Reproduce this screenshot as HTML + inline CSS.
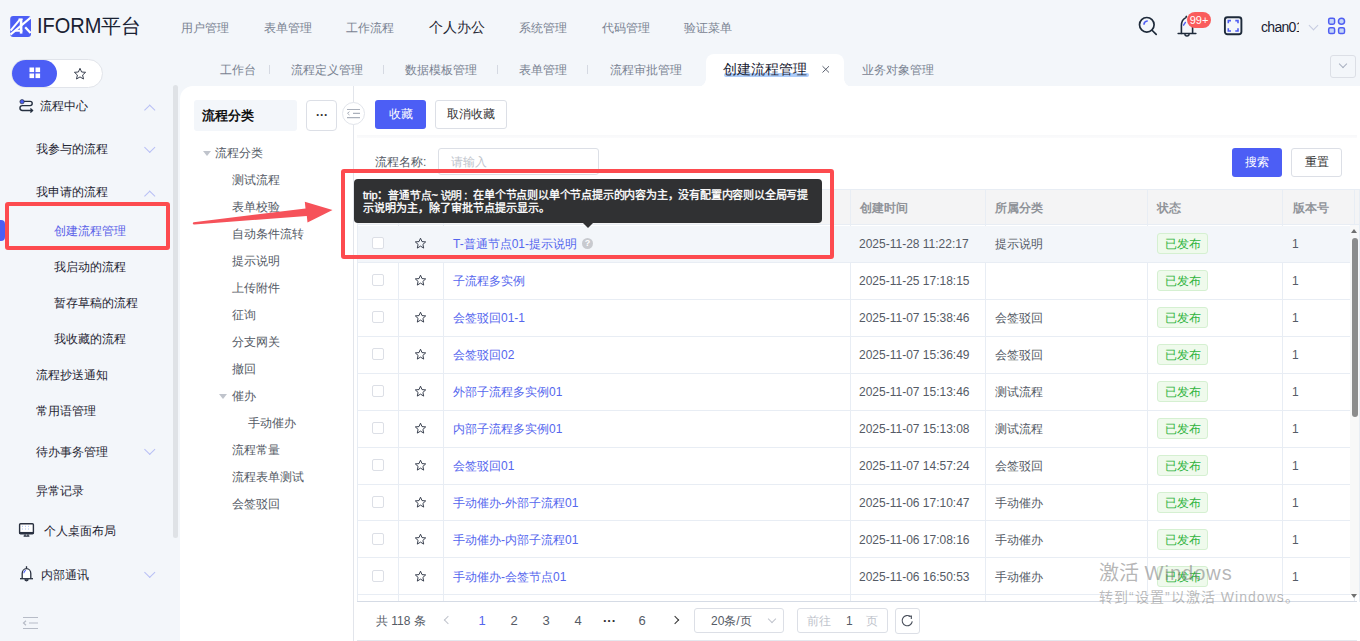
<!DOCTYPE html>
<html><head><meta charset="utf-8">
<style>
*{margin:0;padding:0;box-sizing:border-box;}
html,body{width:1360px;height:641px;overflow:hidden;background:#f3f6fa;font-family:"Liberation Sans",sans-serif;font-size:12px;color:#1f2533;}
.a{position:absolute;white-space:nowrap;}
.t12{font-size:12px;line-height:16px;height:16px;}
/* header */
.nav{color:#7a8392;font-size:12px;line-height:16px;top:20px;}
.tab{color:#7a8392;font-size:12px;line-height:16px;top:62px;}
.sep{position:absolute;top:65px;width:1px;height:9px;background:#d5d9e2;}
.side{font-size:12px;line-height:16px;color:#1f2533;}
.chev{position:absolute;width:7.5px;height:7.5px;border-left:1px solid #b8bff5;border-top:1px solid #b8bff5;}
.tree{font-size:12px;line-height:16px;color:#555b66;}
.row{position:absolute;left:357px;width:993px;height:37px;border-bottom:1px solid #e8edf4;}
.cell{position:absolute;top:0;height:37px;line-height:37px;font-size:12px;color:#555b66;white-space:nowrap;}
.link{color:#5566ee;}
.cb{position:absolute;left:15px;top:12px;width:12px;height:12px;border:1px solid #dcdfe6;border-radius:2px;background:#fff;}
.tag{position:absolute;top:8px;height:21px;line-height:19px;padding:0 6px;border:1px solid #d3f0cf;background:#effaec;color:#3bb44a;border-radius:3px;font-size:12px;}
.vl{position:absolute;top:0;width:1px;height:37px;background:#e8edf4;}
</style></head><body>

<!-- ===== HEADER ===== -->
<svg class="a" style="left:10px;top:16px" width="21" height="21" viewBox="0 0 21 21">
  <rect x="0.2" y="0" width="20.8" height="21" rx="3" fill="#4c5ef5"/>
  <path d="M0.4 18.6 L21 1.4" stroke="#fff" stroke-width="2.1"/>
  <path d="M0.6 14.6 L9.8 3.6" stroke="#fff" stroke-width="2"/>
  <path d="M8.6 3.2 H12.6" stroke="#fff" stroke-width="1.6"/>
  <path d="M11.1 3 V17.6" stroke="#fff" stroke-width="2.6"/>
  <path d="M5.2 14.8 H12.4" stroke="#fff" stroke-width="1.9"/>
  <path d="M15.2 11.3 L20.6 17" stroke="#fff" stroke-width="2.2"/>
</svg>
<div class="a" style="left:37px;top:13px;font-size:20px;line-height:26px;color:#1a2233;"><span style="display:inline-block;transform:scaleY(1.09);transform-origin:50% 19.5px;">IFORM</span>平台</div>

<div class="a nav" style="left:181px">用户管理</div>
<div class="a nav" style="left:264px">表单管理</div>
<div class="a nav" style="left:346px">工作流程</div>
<div class="a nav" style="left:429px;color:#1f2533;font-size:14px;top:19px">个人办公</div>
<div class="a nav" style="left:519px">系统管理</div>
<div class="a nav" style="left:602px">代码管理</div>
<div class="a nav" style="left:684px">验证菜单</div>

<!-- search -->
<svg class="a" style="left:1136px;top:14px" width="24" height="24" viewBox="0 0 24 24">
  <circle cx="10.8" cy="10.8" r="7.3" stroke="#1e2a3a" stroke-width="1.7" fill="none"/>
  <path d="M16.3 16.5 L20.2 20.4" stroke="#1e2a3a" stroke-width="1.7" stroke-linecap="round"/>
  <path d="M8 10.2 A3.6 3.6 0 0 1 11.2 7" stroke="#4f5ef2" stroke-width="1.6" fill="none" stroke-linecap="round"/>
</svg>
<!-- bell -->
<svg class="a" style="left:1176px;top:14px" width="22" height="24" viewBox="0 0 22 24">
  <path d="M2.1 19.4 H19.9" stroke="#1e2a3a" stroke-width="1.5" stroke-linecap="round"/>
  <path d="M5.4 19.4 V11.5 Q5.4 5.8 9.8 3.6 L10.4 2.4" stroke="#1e2a3a" stroke-width="1.6" fill="none" stroke-linecap="round"/>
  <path d="M16.6 19.4 V10 Q16.6 5.8 12.5 3.6" stroke="#1e2a3a" stroke-width="1.6" fill="none"/>
  <path d="M8.9 20 A2.1 2 0 0 0 13.1 20" stroke="#1e2a3a" stroke-width="1.4" fill="none"/>
  <path d="M7.6 11.2 L9.4 8.4" stroke="#4f5ef2" stroke-width="1.4" fill="none" stroke-linecap="round"/>
</svg>
<div class="a" style="left:1187px;top:12px;width:24px;height:16px;border-radius:8px;background:#fa5c5c;color:#fff;font-size:11px;line-height:16px;text-align:center;">99+</div>
<!-- fullscreen -->
<svg class="a" style="left:1223px;top:15px" width="20" height="21" viewBox="0 0 20 21">
  <rect x="1.9" y="2.2" width="16.5" height="17" rx="2.5" stroke="#1e2a3a" stroke-width="1.9" fill="none"/>
  <path d="M5.3 8.3 V5.6 H8 M12.3 5.6 H15 V8.3 M15 13.3 V16 H12.3 M8 16 H5.3 V13.3" stroke="#4f5ef2" stroke-width="1.6" fill="none"/>
</svg>
<div class="a" style="left:1261px;top:18px;width:38px;overflow:hidden;font-size:14px;line-height:18px;letter-spacing:-0.7px;color:#1a2233;">chan01</div>
<div class="a" style="left:1310px;top:22px;width:7px;height:7px;border-right:1px solid #c5cbe0;border-bottom:1px solid #c5cbe0;transform:rotate(45deg);"></div>
<svg class="a" style="left:1327px;top:17px" width="19" height="19" viewBox="0 0 19 19">
  <rect x="1.7" y="1.2" width="5.9" height="6" rx="1.6" fill="#c5d6f8" stroke="#4f5ef2" stroke-width="1.5"/>
  <circle cx="14.5" cy="4.2" r="3.05" fill="#c5d6f8" stroke="#4f5ef2" stroke-width="1.5"/>
  <rect x="1.7" y="10.7" width="5.9" height="5.9" rx="1.6" fill="#c5d6f8" stroke="#4f5ef2" stroke-width="1.5"/>
  <rect x="11.6" y="10.7" width="5.9" height="5.9" rx="1.6" fill="#c5d6f8" stroke="#4f5ef2" stroke-width="1.5"/>
</svg>

<!-- ===== SIDEBAR ===== -->
<div class="a" style="left:11px;top:59px;width:92px;height:29px;border-radius:15px;background:#fff;border:1px solid #e1e4ea;"></div>
<div class="a" style="left:12px;top:60px;width:45px;height:27px;border-radius:14px;background:#4c5ef5;"></div>
<svg class="a" style="left:29px;top:67px" width="12" height="12" viewBox="0 0 12 12"><rect x="0.5" y="0.5" width="4.6" height="4.6" fill="#fff"/><rect x="6.5" y="0.5" width="4.6" height="4.6" fill="#fff"/><rect x="0.5" y="6.5" width="4.6" height="4.6" fill="#fff"/><rect x="6.5" y="6.5" width="4.6" height="4.6" fill="#fff"/></svg>
<svg class="a" style="left:72.5px;top:66.5px" width="14" height="14" viewBox="0 0 14 14"><path d="M7 1.3 L8.6 5 L12.6 5.3 L9.6 8 L10.5 12 L7 9.9 L3.5 12 L4.4 8 L1.4 5.3 L5.4 5 Z" fill="none" stroke="#3a4150" stroke-width="1"/></svg>

<!-- scrollbar -->
<div class="a" style="left:173px;top:85px;width:5px;height:453px;border-radius:3px;background:#dfe2e6;"></div>

<!-- flow center -->
<svg class="a" style="left:14px;top:94px" width="26" height="24" viewBox="0 0 26 24">
  <path d="M8 7.4 H16.1 A2.1 2.1 0 0 1 16.1 11.6 H8.4 A2.45 2.45 0 0 0 8.4 16.5 H18.4" stroke="#253040" stroke-width="1.4" fill="none"/>
  <path d="M16.4 14.5 L18.5 16.5 L16.4 18.5" stroke="#253040" stroke-width="1.4" fill="none"/>
  <circle cx="8.05" cy="7.7" r="2.15" fill="#4c5ef5" stroke="#253040" stroke-width="0.7"/>
</svg>
<div class="a side" style="left:40px;top:98px">流程中心</div>
<div class="chev" style="left:145.5px;top:106px;transform:rotate(45deg)"></div>
<div class="a side" style="left:36px;top:141px">我参与的流程</div>
<div class="chev" style="left:146px;top:144px;transform:rotate(225deg)"></div>
<div class="a side" style="left:36px;top:184px">我申请的流程</div>
<div class="chev" style="left:145.5px;top:192px;transform:rotate(45deg)"></div>
<div class="a" style="left:0;top:220px;width:5px;height:21px;border-radius:0 4px 4px 0;background:#4c5ef5;"></div>
<div class="a side" style="left:54px;top:223px;color:#5b62e8">创建流程管理</div>
<div class="a side" style="left:54px;top:259px">我启动的流程</div>
<div class="a side" style="left:54px;top:295px">暂存草稿的流程</div>
<div class="a side" style="left:54px;top:331px">我收藏的流程</div>
<div class="a side" style="left:36px;top:367px">流程抄送通知</div>
<div class="a side" style="left:36px;top:403px">常用语管理</div>
<div class="a side" style="left:36px;top:444px">待办事务管理</div>
<div class="chev" style="left:146px;top:446px;transform:rotate(225deg)"></div>
<div class="a side" style="left:36px;top:483px">异常记录</div>
<svg class="a" style="left:18px;top:522px" width="17" height="16" viewBox="0 0 17 16">
  <rect x="1.6" y="1.8" width="13.8" height="10" rx="1" stroke="#2a3140" stroke-width="1.4" fill="#fff"/>
  <path d="M1.2 10.9 H15.8" stroke="#2a3140" stroke-width="1.9"/>
  <path d="M4 4.3 H13 M4 7 H13" stroke="#a9c4f5" stroke-width="1" stroke-dasharray="1 2"/>
  <path d="M5.6 14.2 H11.4 M7.2 12.4 L6.8 14.2 M9.8 12.4 L10.2 14.2" stroke="#2a3140" stroke-width="1.3"/>
</svg>
<div class="a side" style="left:44px;top:523px">个人桌面布局</div>
<svg class="a" style="left:18px;top:564px" width="17" height="18" viewBox="0 0 17 18">
  <path d="M4.2 14.6 V9.6 A4.3 5 0 0 1 12.8 9.6 V14.6" stroke="#2a3140" stroke-width="1.3" fill="#fff"/>
  <path d="M2 14.7 H15" stroke="#2a3140" stroke-width="1.3"/>
  <path d="M8.5 2.2 V4.4" stroke="#2a3140" stroke-width="1.3"/>
  <path d="M6.9 15.3 A1.6 1.5 0 0 0 10.1 15.3" stroke="#2a3140" stroke-width="1.3" fill="#2a3140"/>
  <path d="M5.8 9.2 A3 3.6 0 0 1 7.8 6.3" stroke="#4f5ef2" stroke-width="1.1" fill="none"/>
</svg>
<div class="a side" style="left:41px;top:567px">内部通讯</div>
<div class="chev" style="left:146px;top:569px;transform:rotate(225deg)"></div>
<svg class="a" style="left:22px;top:616px" width="17" height="14" viewBox="0 0 17 14">
  <path d="M1 1.5 H16 M7 7 H16 M1 12.5 H16" stroke="#b7bcc7" stroke-width="1.2"/>
  <path d="M4 4.8 L1.5 7 L4 9.2" stroke="#b7bcc7" stroke-width="1.2" fill="none"/>
</svg>

<!-- ===== TABS ===== -->
<div class="a tab" style="left:220px">工作台</div>
<div class="sep" style="left:269px"></div>
<div class="a tab" style="left:291px">流程定义管理</div>
<div class="sep" style="left:383px"></div>
<div class="a tab" style="left:405px">数据模板管理</div>
<div class="sep" style="left:497px"></div>
<div class="a tab" style="left:519px">表单管理</div>
<div class="sep" style="left:587px"></div>
<div class="a tab" style="left:610px">流程审批管理</div>
<!-- active tab -->
<div class="a" style="left:706px;top:54px;width:138px;height:33px;background:#fff;border-radius:8px 8px 0 0;"></div>
<div class="a" style="left:698px;top:79px;width:8px;height:8px;background:radial-gradient(circle at 0 0, #f3f6fa 7.5px, #fff 8px);"></div>
<div class="a" style="left:844px;top:79px;width:8px;height:8px;background:radial-gradient(circle at 100% 0, #f3f6fa 7.5px, #fff 8px);"></div>
<div class="a" style="left:724px;top:73px;width:85px;height:4px;border-radius:2px;background:#aecdf8;"></div>
<div class="a tab" style="left:723px;top:60px;color:#1a2233;font-size:14px;line-height:18px;">创建流程管理</div>
<svg class="a" style="left:821px;top:65px" width="9" height="9" viewBox="0 0 9 9"><path d="M1.5 1.2 L8 7.5 M8 1.2 L1.5 7.5" stroke="#4a5060" stroke-width="0.9"/></svg>
<div class="a tab" style="left:862px">业务对象管理</div>
<div class="a" style="left:1330px;top:55px;width:26px;height:23px;border:1px solid #dcdfe6;border-radius:3px;"></div>
<div class="a" style="left:1340px;top:61px;width:6px;height:6px;border-right:1px solid #a9b0c0;border-bottom:1px solid #a9b0c0;transform:rotate(45deg);"></div>

<!-- ===== MAIN PANEL ===== -->
<div class="a" style="left:180px;top:86px;width:1200px;height:600px;background:#fff;border-radius:13px 0 0 0;"></div>
<!-- tree panel -->
<div class="a" style="left:194px;top:100px;width:103px;height:31px;background:#f3f6fa;border-radius:3px;"></div>
<div class="a" style="left:202px;top:108px;font-size:13px;line-height:16px;font-weight:bold;color:#111;">流程分类</div>
<div class="a" style="left:306px;top:100px;width:31px;height:31px;border:1px solid #dcdfe6;border-radius:4px;"></div>
<div class="a" style="left:316px;top:109px;font-size:12px;line-height:12px;letter-spacing:0px;color:#333;font-weight:bold;">···</div>
<div class="a" style="left:353px;top:86px;width:1px;height:555px;background:#e2e5eb;"></div>
<div class="a" style="left:342px;top:102px;width:23px;height:23px;border:1px solid #e2e5eb;border-radius:50%;background:#fff;"></div>
<svg class="a" style="left:346px;top:108px" width="15" height="11" viewBox="0 0 15 11">
  <path d="M1 1.5 H14 M7 5.3 H14 M1 9.7 H14" stroke="#aab0bb" stroke-width="1.2"/>
  <path d="M3.5 3.6 L1.5 5.3 L3.5 7" stroke="#aab0bb" stroke-width="1" fill="none"/>
</svg>

<!-- tree -->
<div class="a tree" style="left:215px;top:145px">流程分类</div>
<div class="a tree" style="left:232px;top:172px">测试流程</div>
<div class="a tree" style="left:232px;top:199px">表单校验</div>
<div class="a tree" style="left:232px;top:226px">自动条件流转</div>
<div class="a tree" style="left:232px;top:253px">提示说明</div>
<div class="a tree" style="left:232px;top:280px">上传附件</div>
<div class="a tree" style="left:232px;top:307px">征询</div>
<div class="a tree" style="left:232px;top:334px">分支网关</div>
<div class="a tree" style="left:232px;top:361px">撤回</div>
<div class="a tree" style="left:232px;top:388px">催办</div>
<div class="a tree" style="left:248px;top:415px">手动催办</div>
<div class="a tree" style="left:232px;top:442px">流程常量</div>
<div class="a tree" style="left:232px;top:469px">流程表单测试</div>
<div class="a tree" style="left:232px;top:496px">会签驳回</div>
<div class="a" style="left:203px;top:151px;width:0;height:0;border-left:4px solid transparent;border-right:4px solid transparent;border-top:5px solid #c0c4cc;"></div>
<div class="a" style="left:219px;top:394px;width:0;height:0;border-left:4px solid transparent;border-right:4px solid transparent;border-top:5px solid #c0c4cc;"></div>


<!-- ===== TABLE PANEL ===== -->
<div class="a" style="left:375px;top:100px;width:51px;height:29px;background:#4c5ef5;border-radius:3px;color:#fff;font-size:12px;line-height:29px;text-align:center;">收藏</div>
<div class="a" style="left:435px;top:100px;width:72px;height:29px;border:1px solid #dcdfe6;border-radius:3px;color:#333;font-size:12px;line-height:27px;text-align:center;">取消收藏</div>
<div class="a" style="left:357px;top:135px;width:1000px;height:3px;background:linear-gradient(#f7f8fa,#fbfbfc);"></div>
<div class="a" style="left:375px;top:154px;font-size:12px;line-height:16px;color:#555b66;">流程名称:</div>
<div class="a" style="left:438px;top:148px;width:161px;height:27px;border:1px solid #dcdfe6;border-radius:3px;"></div>
<div class="a" style="left:451px;top:154px;font-size:12px;line-height:16px;color:#c0c4cc;">请输入</div>
<div class="a" style="left:1232px;top:148px;width:50px;height:29px;background:#4c5ef5;border-radius:3px;color:#fff;font-size:12px;line-height:29px;text-align:center;">搜索</div>
<div class="a" style="left:1291px;top:148px;width:51px;height:29px;border:1px solid #dcdfe6;border-radius:3px;color:#333;font-size:12px;line-height:27px;text-align:center;">重置</div>

<!-- table header -->
<div class="a" style="left:357px;top:189px;width:1002px;height:36px;background:#f4f4f5;border-top:1px solid #e8edf4;border-bottom:1px solid #e8edf4;"></div>
<div class="a" style="left:357px;top:189px;width:1px;height:413px;background:#e8edf4;"></div>
<div class="a" style="left:398px;top:189px;width:1px;height:413px;background:#e8edf4;"></div>
<div class="a" style="left:443px;top:189px;width:1px;height:413px;background:#e8edf4;"></div>
<div class="a" style="left:850px;top:189px;width:1px;height:413px;background:#e8edf4;"></div>
<div class="a" style="left:985px;top:189px;width:1px;height:413px;background:#e8edf4;"></div>
<div class="a" style="left:1147px;top:189px;width:1px;height:413px;background:#e8edf4;"></div>
<div class="a" style="left:1282px;top:189px;width:1px;height:413px;background:#e8edf4;"></div>
<div class="a" style="left:1354px;top:189px;width:1px;height:413px;background:#e8edf4;"></div>
<div class="a" style="left:860px;top:200px;font-size:12px;line-height:16px;font-weight:bold;color:#909399;">创建时间</div>
<div class="a" style="left:995px;top:200px;font-size:12px;line-height:16px;font-weight:bold;color:#909399;">所属分类</div>
<div class="a" style="left:1157px;top:200px;font-size:12px;line-height:16px;font-weight:bold;color:#909399;">状态</div>
<div class="a" style="left:1293px;top:200px;font-size:12px;line-height:16px;font-weight:bold;color:#909399;">版本号</div>
<div class="a" style="left:358px;top:226px;width:992px;height:36px;background:#f3f6fa;"></div>
<div class="a" style="left:358px;top:262px;width:992px;height:1px;background:#e8edf4;"></div>
<div class="a" style="left:372px;top:237px;width:12px;height:12px;border:1px solid #dcdfe6;border-radius:2px;background:#fff;"></div>
<svg class="a" style="left:414px;top:237px" width="13" height="13" viewBox="0 0 13 13"><path d="M6.5 1.2 L8 4.6 L11.7 4.9 L8.9 7.4 L9.7 11.1 L6.5 9.1 L3.3 11.1 L4.1 7.4 L1.3 4.9 L5 4.6 Z" fill="none" stroke="#3a4150" stroke-width="1"/></svg>
<div class="a" style="left:453px;top:236px;font-size:12px;line-height:16px;color:#5566ee;">T-普通节点01-提示说明</div>
<div class="a" style="left:859px;top:236px;font-size:12px;line-height:16px;color:#555b66;">2025-11-28 11:22:17</div>
<div class="a" style="left:995px;top:236px;font-size:12px;line-height:16px;color:#555b66;">提示说明</div>
<div class="a" style="left:1157px;top:233px;width:51px;height:21px;border:1px solid #d5f0d1;background:#effaec;border-radius:3px;color:#30b43e;font-size:12px;line-height:20px;text-align:center;">已发布</div>
<div class="a" style="left:1292px;top:236px;font-size:12px;line-height:16px;color:#555b66;">1</div>
<div class="a" style="left:358px;top:299px;width:992px;height:1px;background:#e8edf4;"></div>
<div class="a" style="left:372px;top:274px;width:12px;height:12px;border:1px solid #dcdfe6;border-radius:2px;background:#fff;"></div>
<svg class="a" style="left:414px;top:274px" width="13" height="13" viewBox="0 0 13 13"><path d="M6.5 1.2 L8 4.6 L11.7 4.9 L8.9 7.4 L9.7 11.1 L6.5 9.1 L3.3 11.1 L4.1 7.4 L1.3 4.9 L5 4.6 Z" fill="none" stroke="#3a4150" stroke-width="1"/></svg>
<div class="a" style="left:453px;top:273px;font-size:12px;line-height:16px;color:#5566ee;">子流程多实例</div>
<div class="a" style="left:859px;top:273px;font-size:12px;line-height:16px;color:#555b66;">2025-11-25 17:18:15</div>
<div class="a" style="left:1157px;top:270px;width:51px;height:21px;border:1px solid #d5f0d1;background:#effaec;border-radius:3px;color:#30b43e;font-size:12px;line-height:20px;text-align:center;">已发布</div>
<div class="a" style="left:1292px;top:273px;font-size:12px;line-height:16px;color:#555b66;">1</div>
<div class="a" style="left:358px;top:336px;width:992px;height:1px;background:#e8edf4;"></div>
<div class="a" style="left:372px;top:311px;width:12px;height:12px;border:1px solid #dcdfe6;border-radius:2px;background:#fff;"></div>
<svg class="a" style="left:414px;top:311px" width="13" height="13" viewBox="0 0 13 13"><path d="M6.5 1.2 L8 4.6 L11.7 4.9 L8.9 7.4 L9.7 11.1 L6.5 9.1 L3.3 11.1 L4.1 7.4 L1.3 4.9 L5 4.6 Z" fill="none" stroke="#3a4150" stroke-width="1"/></svg>
<div class="a" style="left:453px;top:310px;font-size:12px;line-height:16px;color:#5566ee;">会签驳回01-1</div>
<div class="a" style="left:859px;top:310px;font-size:12px;line-height:16px;color:#555b66;">2025-11-07 15:38:46</div>
<div class="a" style="left:995px;top:310px;font-size:12px;line-height:16px;color:#555b66;">会签驳回</div>
<div class="a" style="left:1157px;top:307px;width:51px;height:21px;border:1px solid #d5f0d1;background:#effaec;border-radius:3px;color:#30b43e;font-size:12px;line-height:20px;text-align:center;">已发布</div>
<div class="a" style="left:1292px;top:310px;font-size:12px;line-height:16px;color:#555b66;">1</div>
<div class="a" style="left:358px;top:373px;width:992px;height:1px;background:#e8edf4;"></div>
<div class="a" style="left:372px;top:348px;width:12px;height:12px;border:1px solid #dcdfe6;border-radius:2px;background:#fff;"></div>
<svg class="a" style="left:414px;top:348px" width="13" height="13" viewBox="0 0 13 13"><path d="M6.5 1.2 L8 4.6 L11.7 4.9 L8.9 7.4 L9.7 11.1 L6.5 9.1 L3.3 11.1 L4.1 7.4 L1.3 4.9 L5 4.6 Z" fill="none" stroke="#3a4150" stroke-width="1"/></svg>
<div class="a" style="left:453px;top:347px;font-size:12px;line-height:16px;color:#5566ee;">会签驳回02</div>
<div class="a" style="left:859px;top:347px;font-size:12px;line-height:16px;color:#555b66;">2025-11-07 15:36:49</div>
<div class="a" style="left:995px;top:347px;font-size:12px;line-height:16px;color:#555b66;">会签驳回</div>
<div class="a" style="left:1157px;top:344px;width:51px;height:21px;border:1px solid #d5f0d1;background:#effaec;border-radius:3px;color:#30b43e;font-size:12px;line-height:20px;text-align:center;">已发布</div>
<div class="a" style="left:1292px;top:347px;font-size:12px;line-height:16px;color:#555b66;">1</div>
<div class="a" style="left:358px;top:410px;width:992px;height:1px;background:#e8edf4;"></div>
<div class="a" style="left:372px;top:385px;width:12px;height:12px;border:1px solid #dcdfe6;border-radius:2px;background:#fff;"></div>
<svg class="a" style="left:414px;top:385px" width="13" height="13" viewBox="0 0 13 13"><path d="M6.5 1.2 L8 4.6 L11.7 4.9 L8.9 7.4 L9.7 11.1 L6.5 9.1 L3.3 11.1 L4.1 7.4 L1.3 4.9 L5 4.6 Z" fill="none" stroke="#3a4150" stroke-width="1"/></svg>
<div class="a" style="left:453px;top:384px;font-size:12px;line-height:16px;color:#5566ee;">外部子流程多实例01</div>
<div class="a" style="left:859px;top:384px;font-size:12px;line-height:16px;color:#555b66;">2025-11-07 15:13:46</div>
<div class="a" style="left:995px;top:384px;font-size:12px;line-height:16px;color:#555b66;">测试流程</div>
<div class="a" style="left:1157px;top:381px;width:51px;height:21px;border:1px solid #d5f0d1;background:#effaec;border-radius:3px;color:#30b43e;font-size:12px;line-height:20px;text-align:center;">已发布</div>
<div class="a" style="left:1292px;top:384px;font-size:12px;line-height:16px;color:#555b66;">1</div>
<div class="a" style="left:358px;top:447px;width:992px;height:1px;background:#e8edf4;"></div>
<div class="a" style="left:372px;top:422px;width:12px;height:12px;border:1px solid #dcdfe6;border-radius:2px;background:#fff;"></div>
<svg class="a" style="left:414px;top:422px" width="13" height="13" viewBox="0 0 13 13"><path d="M6.5 1.2 L8 4.6 L11.7 4.9 L8.9 7.4 L9.7 11.1 L6.5 9.1 L3.3 11.1 L4.1 7.4 L1.3 4.9 L5 4.6 Z" fill="none" stroke="#3a4150" stroke-width="1"/></svg>
<div class="a" style="left:453px;top:421px;font-size:12px;line-height:16px;color:#5566ee;">内部子流程多实例01</div>
<div class="a" style="left:859px;top:421px;font-size:12px;line-height:16px;color:#555b66;">2025-11-07 15:13:08</div>
<div class="a" style="left:995px;top:421px;font-size:12px;line-height:16px;color:#555b66;">测试流程</div>
<div class="a" style="left:1157px;top:418px;width:51px;height:21px;border:1px solid #d5f0d1;background:#effaec;border-radius:3px;color:#30b43e;font-size:12px;line-height:20px;text-align:center;">已发布</div>
<div class="a" style="left:1292px;top:421px;font-size:12px;line-height:16px;color:#555b66;">1</div>
<div class="a" style="left:358px;top:484px;width:992px;height:1px;background:#e8edf4;"></div>
<div class="a" style="left:372px;top:459px;width:12px;height:12px;border:1px solid #dcdfe6;border-radius:2px;background:#fff;"></div>
<svg class="a" style="left:414px;top:459px" width="13" height="13" viewBox="0 0 13 13"><path d="M6.5 1.2 L8 4.6 L11.7 4.9 L8.9 7.4 L9.7 11.1 L6.5 9.1 L3.3 11.1 L4.1 7.4 L1.3 4.9 L5 4.6 Z" fill="none" stroke="#3a4150" stroke-width="1"/></svg>
<div class="a" style="left:453px;top:458px;font-size:12px;line-height:16px;color:#5566ee;">会签驳回01</div>
<div class="a" style="left:859px;top:458px;font-size:12px;line-height:16px;color:#555b66;">2025-11-07 14:57:24</div>
<div class="a" style="left:995px;top:458px;font-size:12px;line-height:16px;color:#555b66;">会签驳回</div>
<div class="a" style="left:1157px;top:455px;width:51px;height:21px;border:1px solid #d5f0d1;background:#effaec;border-radius:3px;color:#30b43e;font-size:12px;line-height:20px;text-align:center;">已发布</div>
<div class="a" style="left:1292px;top:458px;font-size:12px;line-height:16px;color:#555b66;">1</div>
<div class="a" style="left:358px;top:520px;width:992px;height:1px;background:#e8edf4;"></div>
<div class="a" style="left:372px;top:496px;width:12px;height:12px;border:1px solid #dcdfe6;border-radius:2px;background:#fff;"></div>
<svg class="a" style="left:414px;top:496px" width="13" height="13" viewBox="0 0 13 13"><path d="M6.5 1.2 L8 4.6 L11.7 4.9 L8.9 7.4 L9.7 11.1 L6.5 9.1 L3.3 11.1 L4.1 7.4 L1.3 4.9 L5 4.6 Z" fill="none" stroke="#3a4150" stroke-width="1"/></svg>
<div class="a" style="left:453px;top:495px;font-size:12px;line-height:16px;color:#5566ee;">手动催办-外部子流程01</div>
<div class="a" style="left:859px;top:495px;font-size:12px;line-height:16px;color:#555b66;">2025-11-06 17:10:47</div>
<div class="a" style="left:995px;top:495px;font-size:12px;line-height:16px;color:#555b66;">手动催办</div>
<div class="a" style="left:1157px;top:492px;width:51px;height:21px;border:1px solid #d5f0d1;background:#effaec;border-radius:3px;color:#30b43e;font-size:12px;line-height:20px;text-align:center;">已发布</div>
<div class="a" style="left:1292px;top:495px;font-size:12px;line-height:16px;color:#555b66;">1</div>
<div class="a" style="left:358px;top:557px;width:992px;height:1px;background:#e8edf4;"></div>
<div class="a" style="left:372px;top:533px;width:12px;height:12px;border:1px solid #dcdfe6;border-radius:2px;background:#fff;"></div>
<svg class="a" style="left:414px;top:533px" width="13" height="13" viewBox="0 0 13 13"><path d="M6.5 1.2 L8 4.6 L11.7 4.9 L8.9 7.4 L9.7 11.1 L6.5 9.1 L3.3 11.1 L4.1 7.4 L1.3 4.9 L5 4.6 Z" fill="none" stroke="#3a4150" stroke-width="1"/></svg>
<div class="a" style="left:453px;top:532px;font-size:12px;line-height:16px;color:#5566ee;">手动催办-内部子流程01</div>
<div class="a" style="left:859px;top:532px;font-size:12px;line-height:16px;color:#555b66;">2025-11-06 17:08:16</div>
<div class="a" style="left:995px;top:532px;font-size:12px;line-height:16px;color:#555b66;">手动催办</div>
<div class="a" style="left:1157px;top:529px;width:51px;height:21px;border:1px solid #d5f0d1;background:#effaec;border-radius:3px;color:#30b43e;font-size:12px;line-height:20px;text-align:center;">已发布</div>
<div class="a" style="left:1292px;top:532px;font-size:12px;line-height:16px;color:#555b66;">1</div>
<div class="a" style="left:358px;top:594px;width:992px;height:1px;background:#e8edf4;"></div>
<div class="a" style="left:372px;top:570px;width:12px;height:12px;border:1px solid #dcdfe6;border-radius:2px;background:#fff;"></div>
<svg class="a" style="left:414px;top:570px" width="13" height="13" viewBox="0 0 13 13"><path d="M6.5 1.2 L8 4.6 L11.7 4.9 L8.9 7.4 L9.7 11.1 L6.5 9.1 L3.3 11.1 L4.1 7.4 L1.3 4.9 L5 4.6 Z" fill="none" stroke="#3a4150" stroke-width="1"/></svg>
<div class="a" style="left:453px;top:569px;font-size:12px;line-height:16px;color:#5566ee;">手动催办-会签节点01</div>
<div class="a" style="left:859px;top:569px;font-size:12px;line-height:16px;color:#555b66;">2025-11-06 16:50:53</div>
<div class="a" style="left:995px;top:569px;font-size:12px;line-height:16px;color:#555b66;">手动催办</div>
<div class="a" style="left:1157px;top:566px;width:51px;height:21px;border:1px solid #d5f0d1;background:#effaec;border-radius:3px;color:#30b43e;font-size:12px;line-height:20px;text-align:center;">已发布</div>
<div class="a" style="left:1292px;top:569px;font-size:12px;line-height:16px;color:#555b66;">1</div>
<div class="a" style="left:582px;top:238px;width:11px;height:11px;border-radius:50%;background:#c8cacf;color:#fff;font-size:9px;line-height:11px;text-align:center;font-weight:bold;">?</div>
<!-- v scrollbar -->
<div class="a" style="left:1359px;top:189px;width:1px;height:413px;background:#e8edf4;"></div>
<div class="a" style="left:1350px;top:225px;width:9px;height:370px;background:#f8f8f8;"></div>
<div class="a" style="left:1351px;top:229px;width:0;height:0;border-left:3.5px solid transparent;border-right:3.5px solid transparent;border-bottom:4px solid #707070;"></div>
<div class="a" style="left:1352px;top:238px;width:6px;height:179px;border-radius:3px;background:#8c8c8c;"></div>
<div class="a" style="left:1351px;top:594px;width:0;height:0;border-left:3.5px solid transparent;border-right:3.5px solid transparent;border-top:4px solid #707070;"></div>
<div class="a" style="left:357px;top:601px;width:1000px;height:1px;background:#d5dbe5;"></div>

<!-- pagination -->
<div class="a" style="left:376px;top:613px;font-size:12px;line-height:16px;color:#555b66;">共 118 条</div>
<div class="a" style="left:472px;top:613px;width:20px;text-align:center;font-size:13px;line-height:16px;color:#5566ee;">1</div>
<div class="a" style="left:504px;top:613px;width:20px;text-align:center;font-size:13px;line-height:16px;color:#555b66;">2</div>
<div class="a" style="left:536px;top:613px;width:20px;text-align:center;font-size:13px;line-height:16px;color:#555b66;">3</div>
<div class="a" style="left:568px;top:613px;width:20px;text-align:center;font-size:13px;line-height:16px;color:#555b66;">4</div>
<div class="a" style="left:632px;top:613px;width:20px;text-align:center;font-size:13px;line-height:16px;color:#555b66;">6</div>
<div class="a" style="left:603px;top:613px;font-size:13px;line-height:16px;font-weight:bold;color:#333;">···</div>
<div class="a" style="left:445px;top:617px;width:6px;height:6px;border-left:1px solid #c0c4cc;border-bottom:1px solid #c0c4cc;transform:rotate(45deg);"></div>
<div class="a" style="left:672px;top:617px;width:6px;height:6px;border-right:1.3px solid #333;border-top:1.3px solid #333;transform:rotate(45deg);"></div>
<div class="a" style="left:694px;top:608px;width:90px;height:25px;border:1px solid #dcdfe6;border-radius:3px;"></div>
<div class="a" style="left:711px;top:613px;font-size:12px;line-height:16px;color:#555b66;">20条/页</div>
<div class="a" style="left:769px;top:616px;width:6px;height:6px;border-right:1px solid #c0c4cc;border-bottom:1px solid #c0c4cc;transform:rotate(45deg);"></div>
<div class="a" style="left:797px;top:608px;width:91px;height:25px;border:1px solid #dcdfe6;border-radius:3px;"></div>
<div class="a" style="left:807px;top:613px;font-size:12px;line-height:16px;color:#c0c4cc;">前往</div>
<div class="a" style="left:846px;top:613px;font-size:12px;line-height:16px;color:#555b66;">1</div>
<div class="a" style="left:866px;top:613px;font-size:12px;line-height:16px;color:#c0c4cc;">页</div>
<div class="a" style="left:895px;top:608px;width:25px;height:26px;border:1px solid #dcdfe6;border-radius:3px;"></div>
<svg class="a" style="left:900px;top:614px" width="14" height="14" viewBox="0 0 14 14"><path d="M12.3 7.4 A5.1 5.1 0 1 1 10.4 2.6" stroke="#4a505c" stroke-width="1.1" fill="none"/><path d="M8.6 2.2 L11.4 2.1 L11.3 5" stroke="#4a505c" stroke-width="1.1" fill="none"/></svg>
<div class="a" style="left:357px;top:640px;width:1000px;height:1px;background:#e4e7ed;"></div>

<!-- ===== OVERLAYS ===== -->
<div class="a" style="left:354px;top:179px;width:468px;height:44px;background:#303133;border-radius:4px;"></div>
<div class="a" style="left:582px;top:222px;width:0;height:0;border-left:6px solid transparent;border-right:6px solid transparent;border-top:6px solid #303133;"></div>
<div class="a" id="tip" lang="zh-CN" style="text-spacing-trim:space-all;left:363px;top:189px;font-size:11px;line-height:13px;color:#fff;-webkit-text-stroke:0.35px #fff;"><span style="letter-spacing:-0.2px">trip：普通节点~ 说明<span style="display:inline-block;width:11px;padding-left:2px;">:</span>在单个节点则以单个节点提示的内容为主，没有配置内容则以全局写提</span><br>示说明为主，除了审批节点提示显示。</div>
<div class="a" style="left:341px;top:169px;width:493px;height:90px;border:4px solid #fd4b4f;border-radius:3px;"></div>
<div class="a" style="left:5px;top:202px;width:165px;height:48px;border:4px solid #fd4b4f;border-radius:3px;"></div>
<svg class="a" style="left:185px;top:195px" width="155" height="35" viewBox="185 195 155 35">
  <path d="M193.6 222.2 L305.5 208.4 L304.8 201.8 L332.5 210 L307.5 222.4 L306.8 216 L194.4 224.4 A1.1 1.1 0 0 1 193.6 222.2 Z" fill="#f6525a"/>
</svg>


<div class="a" id="wm1" lang="zh-CN" style="left:1099px;top:560px;font-size:20px;line-height:26px;color:rgba(120,120,120,0.55);">激活 <span style="letter-spacing:1px">Windows</span></div>
<div class="a" id="wm2" lang="zh-CN" style="left:1099px;top:588px;font-size:14px;line-height:18px;letter-spacing:1.05px;color:rgba(120,120,120,0.5);">转到“设置”以激活 Windows。</div>
</body></html>
